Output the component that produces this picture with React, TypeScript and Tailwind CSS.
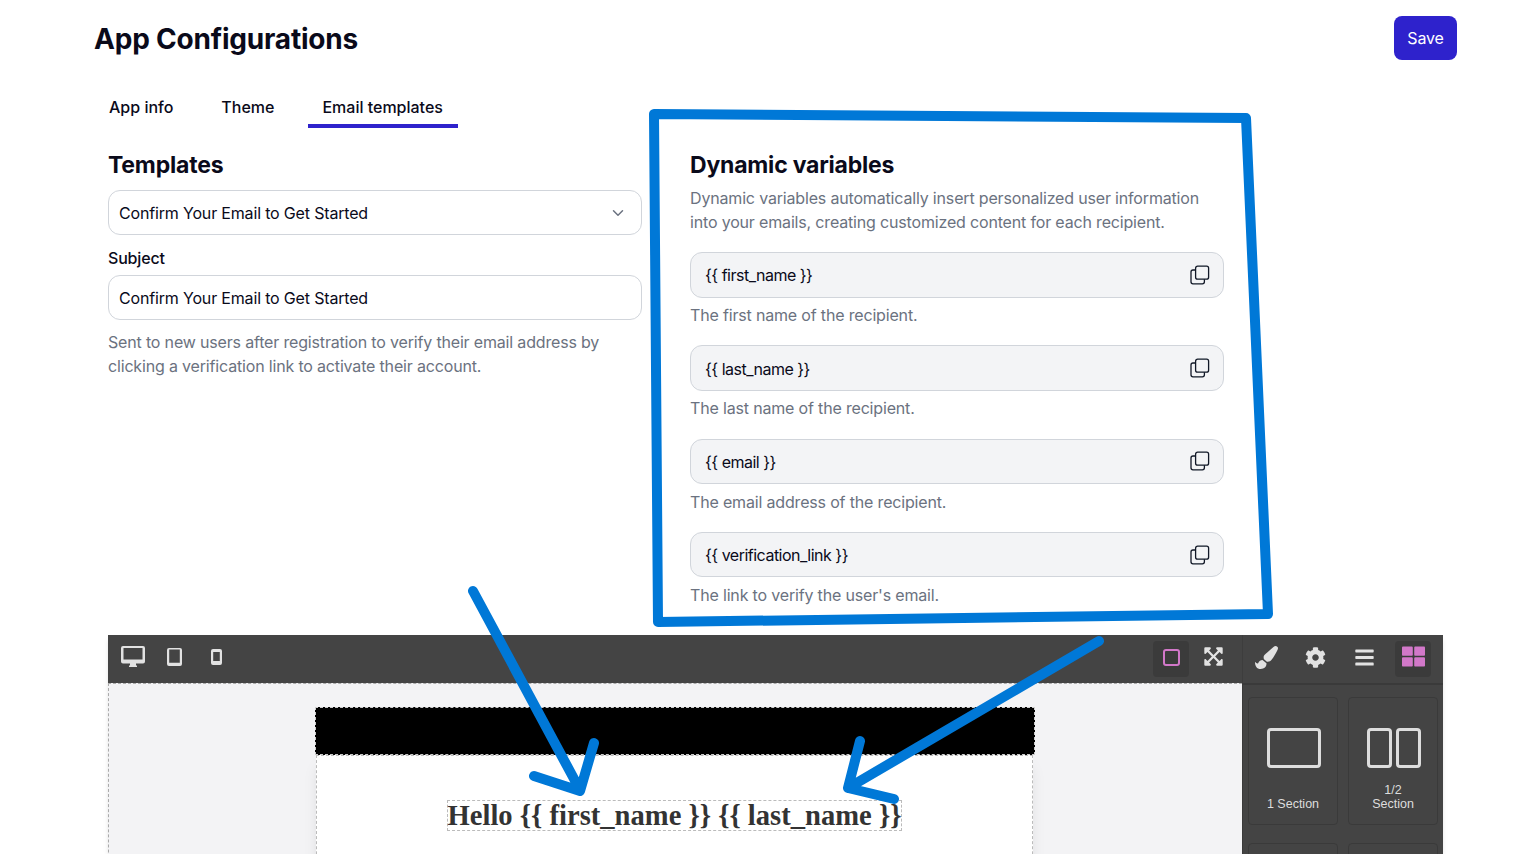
import { ChevronDown } from "lucide-react";
import { FaBars, FaCog, FaExpandArrowsAlt, FaPaintBrush, FaThLarge } from "react-icons/fa";

const variables = [
  { name: "{{ first_name }}", description: "The first name of the recipient." },
  { name: "{{ last_name }}", description: "The last name of the recipient." },
  { name: "{{ email }}", description: "The email address of the recipient." },
  { name: "{{ verification_link }}", description: "The link to verify the user's email." },
];

const CopyIcon = () => (
  <svg width="20" height="20" viewBox="0 0 20 20" fill="none" stroke="#111827" strokeWidth="1.3">
    <rect x="5.6" y="1.2" width="13" height="13" rx="2" />
    <path d="M5.6 5H3a2 2 0 0 0-2 2v9.8a2 2 0 0 0 2 2h9.4a2 2 0 0 0 2-2v-2.6" />
  </svg>
);

const DesktopIcon = () => (
  <svg width="24" height="21" viewBox="0 0 24 21" fill="#e2e2e2">
    <path d="M2 0h20a2 2 0 0 1 2 2v13.5a2 2 0 0 1-2 2h-7v2h1V21H8v-1.500h1v-2H2a2 2 0 0 1-2-2V2a2 2 0 0 1 2-2zm.5 2v11.500h19V2z" fillRule="evenodd" />
  </svg>
);

const TabletIcon = () => (
  <svg width="15" height="18" viewBox="0 0 15 18" fill="#e2e2e2">
    <path d="M2 0h11a2 2 0 0 1 2 2v14a2 2 0 0 1-2 2H2a2 2 0 0 1-2-2V2a2 2 0 0 1 2-2zm.2 1.600v13.200h10.600V1.600z" fillRule="evenodd" />
  </svg>
);

const PhoneIcon = () => (
  <svg width="11" height="16" viewBox="0 0 11 16" fill="#e2e2e2">
    <path d="M2 0h7a2 2 0 0 1 2 2v12a2 2 0 0 1-2 2H2a2 2 0 0 1-2-2V2a2 2 0 0 1 2-2zm.2 3v9h6.600V3z" fillRule="evenodd" />
  </svg>
);

const Annotations = () => (
  <svg className="absolute left-0 top-0 pointer-events-none" width="1522" height="854" fill="none" stroke="#0078d7" strokeLinecap="round" strokeLinejoin="round">
    <path d="M654 114 L1246 118 L1268 614 L658 622 Z" strokeWidth="10" />
    <path d="M473 591 L580 790 M534 776 L580 791 L594 743" strokeWidth="10" />
    <path d="M1099 641 L848 788 M860 741 L848 788 L894 799" strokeWidth="10" />
  </svg>
);

export default function App() {
  return (
    <div className="relative h-[854px] overflow-hidden bg-white font-['Inter',sans-serif] tracking-[-0.17px] text-[#0a0a1a]">
      <header className="flex items-start justify-between pl-[94px] pr-[65px] pt-4">
        <h1 className="mt-[5px] text-[28px] font-bold leading-9 tracking-[-0.2px]">App Configurations</h1>
        <button className="h-11 w-[63px] rounded-lg bg-[#2e22cc] text-base text-white">Save</button>
      </header>

      <div className="px-[108px]">
        <nav className="ml-[-13px] mt-7 flex h-10 gap-5 tracking-normal">
          <div className="px-3.5 pt-[7px] text-base font-medium leading-6">App info</div>
          <div className="px-3.5 pt-[7px] text-base font-medium leading-6">Theme</div>
          <div className="border-b-4 border-[#2e22cc] pl-3.5 pr-[15px] pt-[7px] text-base font-medium leading-6">Email templates</div>
        </nav>

        <div className="mt-[21px] flex h-[486px] gap-12">
          <section className="w-[534px]">
            <h2 className="text-[23px] font-bold leading-8 tracking-[-0.2px]">Templates</h2>
            <div className="mt-[9px] flex h-[45px] items-center justify-between rounded-xl border border-[#d1d5db] pl-2.5 pr-[14px] text-base">
              <span className="pt-px">Confirm Your Email to Get Started</span>
              <ChevronDown size={18} className="text-[#6b7280]" />
            </div>
            <label className="mt-[11px] block text-base font-medium leading-6">Subject</label>
            <div className="mt-[5px] flex h-[45px] items-center rounded-xl border border-[#d1d5db] pl-2.5 text-base">
              Confirm Your Email to Get Started
            </div>
            <p className="mt-2.5 text-base leading-6 text-[#6b7280]">
              Sent to new users after registration to verify their email address by clicking a verification link to activate their account.
            </p>
          </section>

          <section className="w-[534px]">
            <h2 className="text-[23px] font-bold leading-8 tracking-[-0.2px]">Dynamic variables</h2>
            <p className="mt-[5px] text-base leading-6 text-[#6b7280]">
              Dynamic variables automatically insert personalized user information into your emails, creating customized content for each recipient.
            </p>
            <div className="mt-[18px]">
              {variables.map((item) => (
                <div key={item.name} className="h-[93.33px]">
                  <div className="flex h-[45.5px] items-center justify-between rounded-xl border border-[#d1d5db] bg-[#f3f4f6] pl-[14px] pr-[13px] text-base">
                    <span className="pt-px tracking-[-0.5px]">{item.name}</span>
                    <CopyIcon />
                  </div>
                  <p className="mt-[5.5px] text-base leading-6 text-[#6b7280]">{item.description}</p>
                </div>
              ))}
            </div>
          </section>
        </div>

        <div className="w-[1335px] bg-[#444444] font-['Liberation_Sans',sans-serif] tracking-normal shadow-md">
          <div className="flex h-12">
            <div className="flex w-[1134px] items-center justify-between pl-[13px] pr-[11px]">
              <div className="flex items-center pb-[5px]">
                <DesktopIcon />
                <div className="ml-[22px]"><TabletIcon /></div>
                <div className="ml-[29px]"><PhoneIcon /></div>
              </div>
              <div className="flex items-center gap-1.5">
                <div className="flex h-9 w-9 items-center justify-center rounded bg-[#3b3b3b] pb-[3px]">
                  <div className="h-[17px] w-[17px] rounded-[3px] border-2 border-[#d278c9]" />
                </div>
                <div className="flex h-9 w-9 items-center justify-center pb-[5px]">
                  <FaExpandArrowsAlt size={21} color="#e2e2e2" />
                </div>
              </div>
            </div>
            <div className="flex w-[201px] items-center border-l border-[#3d3d3d] pl-[12px]">
              <div className="flex items-center pb-[4px]">
                <FaPaintBrush size={23} color="#e2e2e2" />
                <FaCog size={21} color="#e2e2e2" className="ml-[27px]" />
                <FaBars size={21} color="#e2e2e2" className="ml-[28px]" />
              </div>
              <div className="ml-[20px] flex h-9 w-9 items-center justify-center rounded bg-[#3b3b3b] pb-[5px]">
                <FaThLarge size={23} color="#d278c9" />
              </div>
            </div>
          </div>

          <div className="flex h-[171px] overflow-hidden">
            <div className="h-[220px] w-[1134px] border-l border-t border-dashed border-[#aaaaaa] bg-[#f3f3f5] pl-[206px] pr-[206px] pt-[23px]">
              <div className="h-[48px] w-[720px] border border-dashed border-[#cccccc] bg-black" />
              <div className="ml-px flex h-[150px] w-[717px] justify-center border border-dashed border-[#bbbbbb] bg-white pt-[44px] shadow-lg">
                <div className="h-[31px] border border-dashed border-[#bbbbbb] font-['Liberation_Serif',serif] text-[28.6px] font-bold leading-[30px] whitespace-nowrap text-[#333333]">
                  Hello {"{{ first_name }}"} {"{{ last_name }}"}
                </div>
              </div>
            </div>
            <div className="w-[201px] border-l border-t-2 border-[#3a3a3a] pl-[5px] pt-3">
              <div className="grid grid-cols-[90px_90px] gap-x-2.5 gap-y-[18px]">
                <div className="flex h-[128px] flex-col items-center rounded border border-[#3a3a3a] pl-0.5 pt-[30px] text-[12.5px] leading-[14px] text-[#dddddd]">
                  <div className="h-10 w-[54px] rounded-sm border-[3px] border-[#dddddd]" />
                  <div className="mt-[29px] pr-0.5">1 Section</div>
                </div>
                <div className="flex h-[128px] flex-col items-center rounded border border-[#3a3a3a] pt-[30px] text-[12.5px] leading-[14px] text-[#dddddd]">
                  <div className="flex gap-1 pl-0.5">
                    <div className="h-10 w-[25px] rounded-sm border-[3px] border-[#dddddd]" />
                    <div className="h-10 w-[25px] rounded-sm border-[3px] border-[#dddddd]" />
                  </div>
                  <div className="mt-[15px] text-center">1/2<br />Section</div>
                </div>
                <div className="h-[128px] rounded border border-[#3a3a3a]" />
                <div className="h-[128px] rounded border border-[#3a3a3a]" />
              </div>
            </div>
          </div>
        </div>
      </div>

      <Annotations />
    </div>
  );
}
